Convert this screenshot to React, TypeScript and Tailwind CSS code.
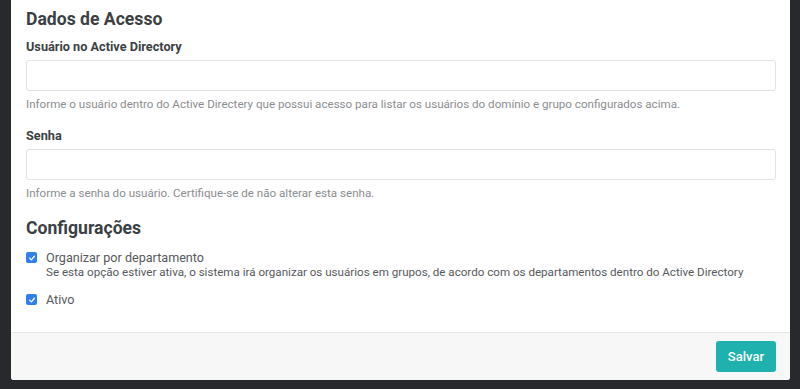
export default function App() {
    return (
        <div className="w-[800px] h-[389px] bg-[#27292c] overflow-hidden" style={{ fontFamily: 'Roboto, "Noto Sans", sans-serif' }}>
            <div className="ml-[11px] w-[779px] h-[380px] bg-white rounded-b-[3px] flex flex-col overflow-hidden">
                <div className="flex-1 px-[15px] pt-[8px]">
                    <h2 className="text-[17.6px] font-bold text-[#3b3f44] leading-[22px]">Dados de Acesso</h2>

                    <label className="block mt-[10px] text-[12.7px] font-bold text-[#3b3f44] leading-[14px]">Usuário no Active Directory</label>
                    <input className="block mt-[6px] w-[750px] h-[31px] border border-[#e2e2e2] rounded-[3px] outline-none" />
                    <p className="mt-[6px] text-[11.6px] text-[#8a8d90] leading-[14px]">
                        Informe o usuário dentro do Active Directery que possui acesso para listar os usuários do domínio e grupo configurados acima.
                    </p>

                    <label className="block mt-[18px] text-[12.7px] font-bold text-[#3b3f44] leading-[14px]">Senha</label>
                    <input type="text" className="block mt-[6px] w-[750px] h-[31px] border border-[#e2e2e2] rounded-[3px] outline-none" />
                    <p className="mt-[6px] text-[11.6px] text-[#8a8d90] leading-[14px]">
                        Informe a senha do usuário. Certifique-se de não alterar esta senha.
                    </p>

                    <h2 className="mt-[17px] text-[17.6px] font-bold text-[#3b3f44] leading-[22px]">Configurações</h2>

                    <div className="mt-[11px] flex gap-[9px]">
                        <Check />
                        <div>
                            <div className="text-[12.6px] text-[#55595d] leading-[15px]">Organizar por departamento</div>
                            <div className="text-[11.6px] text-[#55595d] leading-[15px]">
                                Se esta opção estiver ativa, o sistema irá organizar os usuários em grupos, de acordo com os departamentos dentro do Active Directory
                            </div>
                        </div>
                    </div>
                    <div className="mt-[12px] flex gap-[9px]">
                        <Check />
                        <div className="text-[12.6px] text-[#55595d] leading-[15px]">Ativo</div>
                    </div>
                </div>

                <div className="h-[48px] bg-[#f7f7f7] border-t border-[#e6e6e6] flex items-center justify-end px-[14px]">
                    <button className="h-[31px] px-[12px] rounded-[3px] bg-[#1fb1ad] text-white text-[13px] font-medium">Salvar</button>
                </div>
            </div>
        </div>
    );
}

function Check() {
    return (
        <div className="mt-[2px] w-[11px] h-[11px] rounded-[2px] bg-[#2f80ed] flex items-center justify-center shrink-0">
            <svg width="8" height="8" viewBox="0 0 10 10" fill="none">
                <path d="M2 5.2 L4.2 7.4 L8 2.8" stroke="white" strokeWidth="1.6" strokeLinecap="round" strokeLinejoin="round" />
            </svg>
        </div>
    );
}
